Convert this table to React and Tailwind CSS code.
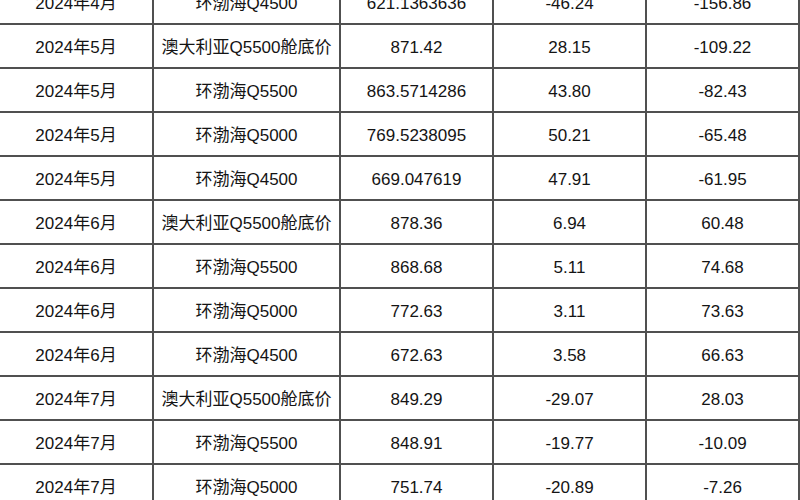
const rows = [
  ["2024年4月", "环渤海Q4500", "621.1363636", "-46.24", "-156.86"],
  ["2024年5月", "澳大利亚Q5500舱底价", "871.42", "28.15", "-109.22"],
  ["2024年5月", "环渤海Q5500", "863.5714286", "43.80", "-82.43"],
  ["2024年5月", "环渤海Q5000", "769.5238095", "50.21", "-65.48"],
  ["2024年5月", "环渤海Q4500", "669.047619", "47.91", "-61.95"],
  ["2024年6月", "澳大利亚Q5500舱底价", "878.36", "6.94", "60.48"],
  ["2024年6月", "环渤海Q5500", "868.68", "5.11", "74.68"],
  ["2024年6月", "环渤海Q5000", "772.63", "3.11", "73.63"],
  ["2024年6月", "环渤海Q4500", "672.63", "3.58", "66.63"],
  ["2024年7月", "澳大利亚Q5500舱底价", "849.29", "-29.07", "28.03"],
  ["2024年7月", "环渤海Q5500", "848.91", "-19.77", "-10.09"],
  ["2024年7月", "环渤海Q5000", "751.74", "-20.89", "-7.26"],
];

export default function App() {
  return (
    <div className="w-[800px] h-[500px] overflow-hidden bg-white">
      <div
        className="-mt-[19px] grid grid-cols-[154px_187px_153px_153px_153px] text-[17px] text-[#141414]"
        style={{ fontFamily: '"Liberation Sans", Arial, "Noto Sans CJK SC", sans-serif' }}
      >
        {rows.map((r, i) =>
          r.map((c, j) => (
            <div
              key={i + "-" + j}
              className="h-[44px] flex items-center justify-center pt-[4px] border-r-2 border-b-2 border-[#505050] whitespace-nowrap"
            >
              {c}
            </div>
          ))
        )}
      </div>
    </div>
  );
}
